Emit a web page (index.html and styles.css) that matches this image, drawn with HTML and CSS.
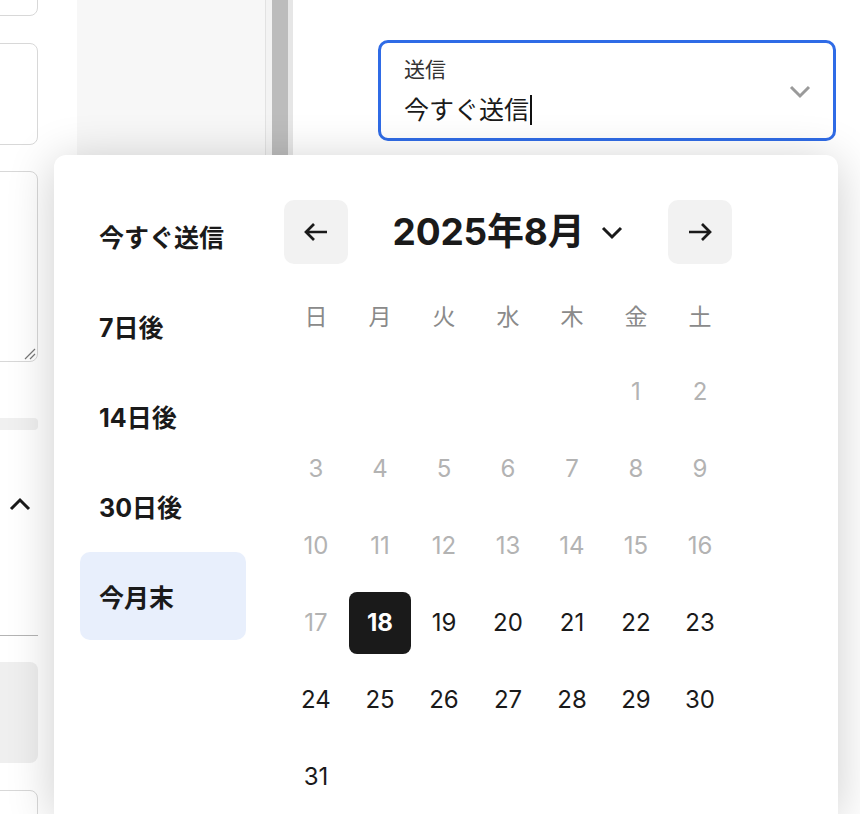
FILE: index.html
```html
<!DOCTYPE html>
<html lang="ja">
<head>
<meta charset="utf-8">
<title>送信日時</title>
<link rel="stylesheet" href="styles.css">
</head>
<body>
<div class="page">
  <div class="leftcol">
    <div class="box box1"></div>
    <div class="box box2"></div>
    <div class="box box3">
      <svg class="grip" width="14" height="14" viewBox="0 0 14 14"><path d="M13 3L3 13M13 8L8 13" stroke="#777" stroke-width="1.2" fill="none"/></svg>
    </div>
    <div class="graybar"></div>
    <div class="upchev">
      <svg width="22" height="14" viewBox="0 0 22 14"><path d="M2 12L11 3L20 12" stroke="#1a1a1a" stroke-width="3" fill="none"/></svg>
    </div>
    <div class="hline"></div>
    <div class="graybox"></div>
    <div class="box box4"></div>
  </div>
  <div class="sidepanel"></div>
  <div class="scrolltrack"><div class="thumb"></div></div>
  <div class="main">
    <div class="field">
      <div class="field-text">
        <div class="field-label">送信</div>
        <div class="field-value">今すぐ送信<span class="caret"></span></div>
      </div>
      <svg class="field-chev" width="22" height="14" viewBox="0 0 22 14"><path d="M2 2L11 11L20 2" stroke="#9a9a9a" stroke-width="3" fill="none"/></svg>
    </div>
  </div>
  <div class="popover">
    <div class="presets">
      <div class="preset">今すぐ送信</div>
      <div class="preset">7日後</div>
      <div class="preset">14日後</div>
      <div class="preset">30日後</div>
      <div class="preset selected">今月末</div>
    </div>
    <div class="calendar">
      <div class="cal-head">
        <div class="navbtn">
          <svg width="26" height="24" viewBox="0 0 26 24"><path d="M24 12H3M11 4L3 12L11 20" stroke="#1a1a1a" stroke-width="2.7" fill="none"/></svg>
        </div>
        <div class="month">
          <span class="month-text">2025年8月</span>
          <svg width="22" height="14" viewBox="0 0 22 14"><path d="M2 2L11 11L20 2" stroke="#1a1a1a" stroke-width="3" fill="none"/></svg>
        </div>
        <div class="navbtn">
          <svg width="26" height="24" viewBox="0 0 26 24"><path d="M2 12H23M15 4L23 12L15 20" stroke="#1a1a1a" stroke-width="2.7" fill="none"/></svg>
        </div>
      </div>
      <div class="weekdays">
        <div>日</div><div>月</div><div>火</div><div>水</div><div>木</div><div>金</div><div>土</div>
      </div>
      <div class="days">
        <div></div><div></div><div></div><div></div><div></div>
        <div class="off">1</div><div class="off">2</div>
        <div class="off">3</div><div class="off">4</div><div class="off">5</div><div class="off">6</div><div class="off">7</div><div class="off">8</div><div class="off">9</div>
        <div class="off">10</div><div class="off">11</div><div class="off">12</div><div class="off">13</div><div class="off">14</div><div class="off">15</div><div class="off">16</div>
        <div class="off">17</div><div><span class="sel">18</span></div><div>19</div><div>20</div><div>21</div><div>22</div><div>23</div>
        <div>24</div><div>25</div><div>26</div><div>27</div><div>28</div><div>29</div><div>30</div>
        <div>31</div>
      </div>
    </div>
  </div>
</div>
</body>
</html>
```

FILE: styles.css
```css
html, body {
  margin: 0;
  padding: 0;
  background: #ffffff;
  font-family: Inter, "Noto Sans CJK JP", sans-serif;
  color: #1a1a1a;
}

.page {
  position: relative;
  display: flex;
  height: 814px;
  overflow: hidden;
}

.leftcol {
  margin-left: -20px;
  width: 58px;
  margin-right: 39px;
  display: flex;
  flex-direction: column;
  flex-shrink: 0;
}

.box {
  box-sizing: border-box;
  border: 1px solid #d8d8d8;
  border-radius: 8px;
  flex-shrink: 0;
}

.box1 {
  margin-top: -44px;
  height: 60px;
}

.box2 {
  margin-top: 27px;
  height: 102px;
}

.box3 {
  margin-top: 26px;
  height: 191px;
  position: relative;
}

.grip {
  position: absolute;
  right: 1px;
  bottom: 1px;
}

.graybar {
  margin-top: 56px;
  height: 12px;
  background: #f0f0f0;
  border-radius: 4px;
  flex-shrink: 0;
}

.upchev {
  margin-top: 67px;
  height: 14px;
  padding-left: 29px;
  flex-shrink: 0;
}

.upchev svg {
  display: block;
}

.hline {
  margin-top: 124px;
  height: 1px;
  background: #b4b4b4;
  flex-shrink: 0;
}

.graybox {
  margin-top: 26px;
  height: 101px;
  background: #efefef;
  border-radius: 8px;
  flex-shrink: 0;
}

.box4 {
  margin-top: 27px;
  height: 60px;
}

.sidepanel {
  width: 188px;
  flex-shrink: 0;
  background: #f7f7f7;
}

.scrolltrack {
  width: 28px;
  flex-shrink: 0;
  box-sizing: border-box;
  border-left: 1px solid #e2e2e2;
  border-right: 5px solid #e6e6e6;
  background: #f3f3f3;
  padding-left: 6px;
}

.thumb {
  width: 16px;
  height: 100%;
  background: #bcbcbc;
}

.main {
  flex: 1;
  padding-left: 85px;
  padding-top: 40px;
}

.field {
  box-sizing: border-box;
  width: 458px;
  height: 101px;
  border: 3px solid #2f6be6;
  border-radius: 10px;
  display: flex;
  align-items: center;
  padding: 0 22px 0 23px;
}

.field-text {
  flex: 1;
  align-self: flex-start;
  padding-top: 15px;
}

.field-label {
  font-size: 21px;
  line-height: 24px;
  color: #333333;
}

.field-value {
  margin-top: 12px;
  font-size: 25px;
  line-height: 32px;
  color: #1a1a1a;
  display: flex;
  align-items: center;
}

.caret {
  display: inline-block;
  width: 1.5px;
  height: 30px;
  background: #111111;
  margin-left: 1px;
}

.field-chev {
  display: block;
  margin-top: 2px;
}

.popover {
  position: absolute;
  left: 54px;
  top: 155px;
  width: 784px;
  height: 659px;
  background: #ffffff;
  border-radius: 12px 12px 0 0;
  box-shadow: 0 6px 48px rgba(0, 0, 0, 0.2);
  display: flex;
  box-sizing: border-box;
  padding: 37px 0 0 26px;
}

.presets {
  width: 166px;
  display: flex;
  flex-direction: column;
  gap: 2px;
}

.preset {
  height: 88px;
  display: flex;
  align-items: center;
  padding-left: 19px;
  font-size: 25px;
  font-weight: 700;
  border-radius: 10px;
  color: #1a1a1a;
}

.preset.selected {
  background: #e8effc;
}

.calendar {
  margin-left: 38px;
  margin-top: 8px;
  width: 448px;
}

.cal-head {
  display: flex;
  justify-content: space-between;
  align-items: center;
  height: 64px;
}

.navbtn {
  width: 64px;
  height: 64px;
  background: #f2f2f2;
  border-radius: 10px;
  display: flex;
  align-items: center;
  justify-content: center;
}

.navbtn svg {
  display: block;
}

.month {
  display: flex;
  align-items: center;
  gap: 17px;
}

.month-text {
  font-size: 37px;
  font-weight: 700;
  line-height: 44px;
  letter-spacing: -0.2px;
}

.month svg {
  display: block;
  margin-top: 2px;
}

.weekdays {
  margin-top: 13px;
  display: grid;
  grid-template-columns: repeat(7, 64px);
  height: 76px;
  align-items: center;
  justify-items: center;
  font-size: 23px;
  color: #8a8a8a;
}

.days {
  display: grid;
  grid-template-columns: repeat(7, 64px);
  grid-auto-rows: 77px;
  align-items: center;
  justify-items: center;
  font-size: 24px;
  color: #1a1a1a;
}

.days .off {
  color: #b3b3b3;
}

.sel {
  width: 62px;
  height: 62px;
  background: #1a1a1a;
  color: #ffffff;
  font-weight: 700;
  border-radius: 8px;
  display: flex;
  align-items: center;
  justify-content: center;
}
```
